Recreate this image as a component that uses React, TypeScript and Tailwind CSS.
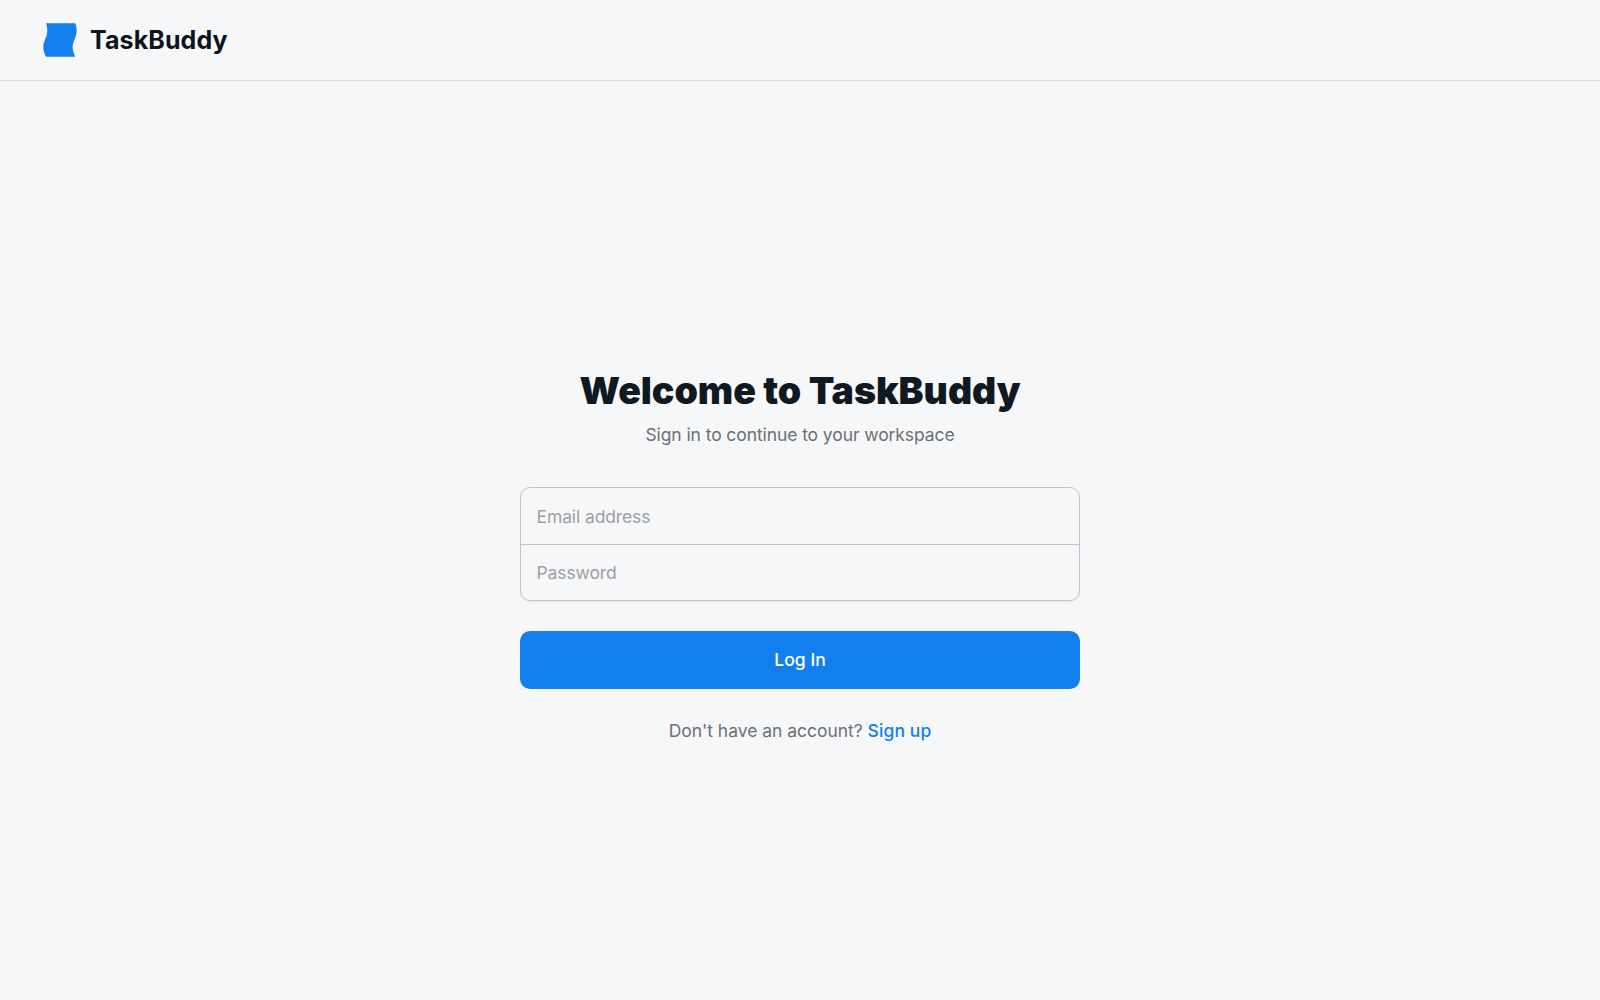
function Logo() {
  return (
    <svg className="size-10 text-[#137fec]" viewBox="0 0 48 48" fill="none" aria-hidden="true">
      <path
        d="M42.4379 44C42.4379 44 36.0744 33.9038 41.1692 24C46.8624 12.9336 42.2078 4 42.2078 4L7.01134 4C7.01134 4 11.6577 12.932 5.96912 23.9969C0.876273 33.9029 7.27094 44 7.27094 44L42.4379 44Z"
        fill="currentColor"
      />
    </svg>
  );
}

const fieldClass =
  "block h-[57.5px] w-full border border-[#bfc2c6] bg-transparent px-[15.5px] text-[17.5px] tracking-[-0.11px] text-[#101922] outline-none placeholder:text-[#9c9fa4]";

export default function App() {
  return (
    <div className="flex h-screen flex-col bg-[#f6f7f8] font-['Inter',sans-serif]">
      <header className="flex h-[81px] items-center gap-2.5 border-b border-[#d9dbdd] px-10">
        <Logo />
        <span className="text-[25px] leading-[35px] font-bold tracking-[0.1px] text-[#0d141b]">TaskBuddy</span>
      </header>
      <main className="flex flex-1 flex-col items-center justify-center pt-[30px]">
        <div className="w-[560px]">
          <h1 className="text-center text-[37.5px] leading-[47px] font-black tracking-[-0.05px] text-[#101922]">
            Welcome to TaskBuddy
          </h1>
          <p className="mt-2 text-center text-[17.5px] leading-[25px] tracking-[-0.09px] text-[#6b7075]">
            Sign in to continue to your workspace
          </p>
          <form className="mt-10" onSubmit={(e) => e.preventDefault()}>
            <div className="rounded-[10px] shadow-[0_1px_2px_rgb(0_0_0/0.06)]">
              <input className={`${fieldClass} rounded-t-[10px]`} type="email" placeholder="Email address" />
              <input className={`${fieldClass} -mt-[1.25px] rounded-b-[10px]`} type="password" placeholder="Password" />
            </div>
            <button
              type="submit"
              className="mt-[30px] flex h-[57.5px] w-full items-center justify-center rounded-[10px] bg-[#137fec] text-[17.5px] font-medium tracking-[0.05px] text-white"
            >
              Log In
            </button>
          </form>
          <p className="mt-[29px] mb-px text-center text-[17.5px] leading-[25px] tracking-[-0.03px] text-[#6b7075]">
            Don't have an account?{" "}
            <a href="#" className="font-medium tracking-[0.1px] text-[#137fec]">
              Sign up
            </a>
          </p>
        </div>
      </main>
    </div>
  );
}
